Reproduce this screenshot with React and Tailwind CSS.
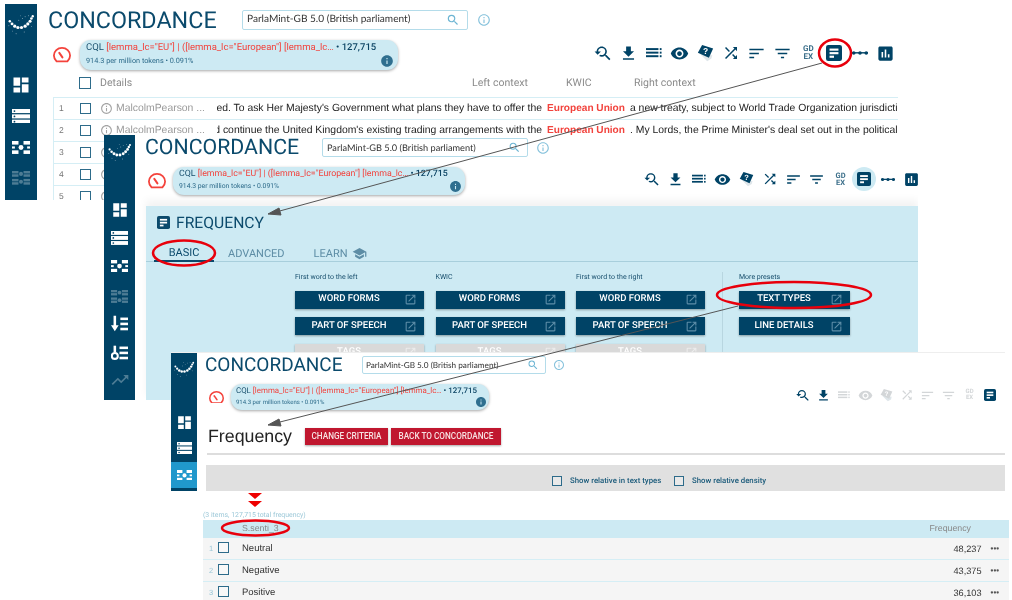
import React from "react";
import {
  MdDashboard, MdYoutubeSearchedFor, MdFileDownload, MdRemoveRedEye, MdShuffle, MdSort, MdFilterList,
  MdAssessment, MdInfoOutline, MdInfo, MdSchool, MdOpenInNew, MdSearch, MdTrendingUp,
} from "react-icons/md";

const Logo = ({ size = 28 }) => (
  <svg width={size} height={size * 0.8} viewBox="0 0 30 24" fill="#fff">
    {[[2, 8, 1.4], [4.5, 11, 1.6], [7.5, 13.5, 1.8], [11, 15, 1.8], [15, 15, 1.8], [19, 13.5, 1.8], [22, 11, 1.8], [24.5, 8, 1.7], [26, 5, 1.5], [27.5, 2.5, 1.3]].map(([x, y, r], i) => (
      <circle key={i} cx={x} cy={y} r={r} />
    ))}
    {[[12, 7, 0.5], [16, 5, 0.5], [19, 3, 0.5], [23, 2, 0.5], [5, 19, 0.5], [9, 22, 0.5], [18, 20, 0.5], [26, 14, 0.5], [1, 13, 0.5], [14, 2, 0.4]].map(([x, y, r], i) => (
      <circle key={i} cx={x} cy={y} r={r} opacity="0.8" />
    ))}
  </svg>
);

const ListIcon = ({ size = 17, color = "#fff" }) => (
  <svg width={size} height={size * 0.82} viewBox="0 0 22 18">
    {[0, 6.5, 13].map((y) => (
      <g key={y}>
        <rect x="0" y={y} width="22" height="5" fill={color} />
        <circle cx="3" cy={y + 2.5} r="1.1" fill="#004366" />
      </g>
    ))}
  </svg>
);

const TreeIcon = ({ size = 17, color = "#fff" }) => (
  <svg width={size} height={size * 0.72} viewBox="0 0 25 18" fill={color}>
    <rect x="0" y="0" width="9" height="5" />
    <rect x="0" y="13" width="9" height="5" />
    <rect x="0" y="7.5" width="4" height="3" />
    <circle cx="12.5" cy="9" r="3.4" />
    <rect x="21" y="7.5" width="4" height="3" />
    <rect x="16" y="0" width="9" height="5" />
    <rect x="16" y="13" width="9" height="5" />
  </svg>
);

const TreeDim = ({ size = 17 }) => (
  <svg width={size} height={size * 0.76} viewBox="0 0 25 19" fill="#fff" opacity="0.3">
    {[0, 11].map((y) => (
      <g key={y}>
        <rect x="0" y={y} width="9" height="3.4" />
        <rect x="0" y={y + 4.6} width="9" height="3.4" />
        <circle cx="12.5" cy={y + 4} r="2.8" />
        <rect x="16" y={y} width="9" height="3.4" />
        <rect x="16" y={y + 4.6} width="9" height="3.4" />
      </g>
    ))}
  </svg>
);

const SortSide = ({ size = 17 }) => (
  <svg width={size} height={size} viewBox="0 0 20 20" fill="#fff">
    <path d="M3 1h3v11h3l-4.5 7L0 12h3z" />
    <rect x="11" y="3" width="9" height="3" />
    <rect x="11" y="9" width="9" height="3" />
    <rect x="11" y="15" width="9" height="3" />
  </svg>
);

const FilterSide = ({ size = 17 }) => (
  <svg width={size} height={size} viewBox="0 0 20 20" fill="#fff">
    <circle cx="4.5" cy="14" r="3.5" fill="none" stroke="#fff" strokeWidth="2.4" />
    <path d="M3 2h3v8H3z" />
    <rect x="10" y="3" width="10" height="3" />
    <rect x="10" y="9" width="10" height="3" />
    <rect x="10" y="15" width="10" height="3" />
  </svg>
);

const Gauge = ({ size = 18 }) => (
  <svg width={size} height={size * 0.85} viewBox="0 0 20 17" fill="none" stroke="#f4433c" strokeWidth="2" strokeLinecap="round" strokeLinejoin="round">
    <path d="M4 16Q1 13 1 9.5A9 8.5 0 0 1 19 9.5Q19 13 16 16Z" />
    <path d="M7 6.5L10.5 11.5" strokeWidth="2.2" />
  </svg>
);

const FreqIcon = ({ size = 18, color = "#004366" }) => (
  <svg width={size} height={size} viewBox="0 0 18 18">
    <rect width="18" height="18" rx="2.5" fill={color} />
    <rect x="4" y="4" width="10" height="2.4" fill="#fff" />
    <rect x="4" y="8" width="10" height="2.4" fill="#fff" />
    <rect x="4" y="12" width="5" height="2.4" fill="#fff" />
  </svg>
);

const LinesIcon = ({ size = 16, color = "#004366" }) => (
  <svg width={size} height={size} viewBox="0 0 18 18" fill={color}>
    <rect x="0" y="3.5" width="14" height="2.2" />
    <rect x="0" y="7.5" width="14" height="2.2" />
    <rect x="0" y="11.5" width="14" height="2.2" />
    <rect x="15.5" y="3.5" width="2" height="2.2" />
    <rect x="15.5" y="7.5" width="2" height="2.2" />
    <rect x="15.5" y="11.5" width="2" height="2.2" />
  </svg>
);

const BookIcon = ({ size = 17, color = "#004366" }) => (
  <svg width={size} height={size} viewBox="0 0 20 20">
    <path d="M3 10l9 9 5-3 1-4z" fill="#dfe6ea" />
    <path d="M6 0l13 4-5 11L1 9z" fill={color} />
    <text x="7" y="11" fontSize="10" fontWeight="700" fill="#fff" fontFamily="Liberation Sans">?</text>
  </svg>
);

const DotsIcon = ({ size = 16, color = "#004366" }) => (
  <svg width={size} height={size * 0.5} viewBox="0 0 18 9" fill={color}>
    <rect x="0" y="3.5" width="18" height="1.6" />
    <circle cx="2" cy="4.5" r="2" />
    <circle cx="9" cy="4.5" r="2" />
    <circle cx="16" cy="4.5" r="2" />
  </svg>
);

const Gdex = ({ cls }) => (
  <span className={`flex flex-col items-center font-bold leading-[0.95] ${cls}`}>
    <span>GD</span>
    <span>EX</span>
  </span>
);

const Checkbox = ({ cls = "w-[11px] h-[11px]" }) => (
  <span className={`block flex-none border-[1.5px] border-[#2d6b8a] bg-white/30 ${cls}`} />
);

const Btn = ({ w, label, grey }) => (
  <div className={`flex h-[18px] flex-none items-center shadow-[0_1px_2px_rgba(0,0,0,0.35)] ${w} ${grey ? "bg-[#d9d9d9]" : "bg-[#004366]"}`}>
    <span className="flex-1 text-center text-[9.5px] font-medium text-white">{label}</span>
    <span className="mr-[7px] flex w-[14px] justify-center">
      <MdOpenInNew className={`flex-none text-[13px] ${grey ? "text-white/50" : "text-[#5d8ea8]"}`} />
    </span>
  </div>
);

const Pill = ({ box, text, sub, info }) => (
  <div className={`flex flex-none flex-col justify-center rounded-[11px] bg-[#cdeaf3] shadow-[0_1px_3px_rgba(0,0,0,0.35)] ${box}`}>
    <div className={`flex items-center whitespace-nowrap ${text}`}>
      <span className="text-[#174e6c]">CQL&nbsp;</span>
      <span className="text-[#f2433d]">[lemma_lc="EU"] | ([lemma_lc="European"] [lemma_lc…</span>
      <span className="font-medium text-[#0c4464]">&nbsp;• 127,715</span>
    </div>
    <div className="flex items-center justify-between">
      <span className={`text-[#2d6b8a] ${sub}`}>914.3 per million tokens • 0.091%</span>
      <MdInfo className={`text-[#2f6f8f] ${info}`} />
    </div>
  </div>
);

const Toolbar = ({ ml, slot, s, gd, active, dim, count = 12 }) => {
  const c = "#004366";
  const g = "#d3d6d8";
  const col = (i) => (dim && i >= 2 && i <= 8 ? g : c);
  const icons = [
    <MdYoutubeSearchedFor size={s + 3} color={col(0)} />,
    <MdFileDownload size={s + 3} color={col(1)} />,
    <LinesIcon size={s} color={col(2)} />,
    <MdRemoveRedEye size={s + 3} color={col(3)} />,
    <BookIcon size={s + 1} color={col(4)} />,
    <MdShuffle size={s + 2} color={col(5)} />,
    <MdSort size={s + 3} color={col(6)} />,
    <MdFilterList size={s + 3} color={col(7)} />,
    <Gdex cls={`${gd} ${dim ? "text-[#d3d6d8]" : "text-[#3c6f8a]"}`} />,
    <span className={active ? "flex h-[24px] w-[24px] flex-none items-center justify-center rounded-full bg-[#cdeaf3]" : "flex"}><FreqIcon size={s} /></span>,
    <DotsIcon size={s} />,
    <MdAssessment size={s + 3} color={c} />,
  ].slice(0, count);
  return (
    <div className={`-mt-[4px] flex items-center ${ml}`}>
      {icons.map((ic, i) => (
        <div key={i} className={`flex flex-none items-center justify-center ${slot}`}>{ic}</div>
      ))}
    </div>
  );
};

const Row1 = ({ n, left, right, kwic = true }) => (
  <div className="flex h-[22px] flex-none items-center border-t border-[#d5eef5] font-['Liberation_Sans',sans-serif] text-[#222]">
    <span className="w-[26px] flex-none pl-[5px] text-[8.5px] text-[#777]">{n}</span>
    <Checkbox />
    <MdInfoOutline className="ml-[9px] flex-none text-[13px] text-[#a4a4a4]" />
    <span className="ml-[3px] w-[101px] flex-none truncate text-[10.4px] text-[#9a9a9a]">MalcolmPearson ...</span>
    {kwic && (
      <>
        <div className="flex w-[325px] flex-none justify-end overflow-hidden whitespace-nowrap text-[10.4px]">{left}</div>
        <span className="mx-[5px] flex-none whitespace-nowrap text-[10.1px] font-bold text-[#f2433d]">European Union</span>
        <div className="flex-1 overflow-hidden whitespace-nowrap text-[10.4px]">{right}</div>
      </>
    )}
  </div>
);

const FreqRow = ({ n, label, val }) => (
  <div className="flex h-[22px] flex-none items-center border-b border-[#d5eef5] bg-[#f5f5f5] font-['Liberation_Sans',sans-serif]">
    <span className="w-[15px] flex-none pl-[6px] text-[7.5px] text-[#9cc8d8]">{n}</span>
    <Checkbox cls="w-[11px] h-[11px] -mt-[3px]" />
    <span className="ml-[13px] mt-[2px] flex-1 text-[9.5px] text-[#333]">{label}</span>
    <span className="mt-[2px] text-[9.2px] text-[#333]">{val}</span>
    <span className="ml-[9px] mr-[10px] text-[8px] font-bold leading-none text-[#555]">•••</span>
  </div>
);

const Overlay = () => (
  <svg className="pointer-events-none absolute left-0 top-0" width="1012" height="600" viewBox="0 0 1012 600">
    <g stroke="#555" strokeWidth="1" fill="#555">
      <line x1="822" y1="63" x2="276" y2="212" />
      <polygon points="268,214 279,208 281,215" />
      <line x1="738" y1="306" x2="276" y2="423" />
      <polygon points="268,425 279,419 281,426" />
    </g>
    <g fill="none" stroke="#e8000c" strokeWidth="2.5">
      <ellipse cx="835" cy="53" rx="16" ry="13.5" />
      <ellipse cx="184" cy="253" rx="31" ry="12.5" />
      <ellipse cx="794" cy="295" rx="77" ry="13" />
      <ellipse cx="255.5" cy="528" rx="33.5" ry="7.5" />
    </g>
    <g fill="#ee0000">
      <polygon points="248,493 262,493 255,499" />
      <polygon points="248,501 262,501 255,507" />
    </g>
  </svg>
);

export default function App() {
  return (
    <div className="relative h-[600px] w-[1012px] overflow-hidden bg-white font-[Roboto,sans-serif] blur-[0.4px] [text-rendering:geometricPrecision]">
      {/* window 1 */}
      <div className="absolute left-[5px] top-[4px] flex h-[196px] w-[893px] overflow-hidden bg-white">
        <div className="flex w-[32px] flex-none flex-col items-center bg-[#004366]">
          <div className="mt-[10px]"><Logo size={27} /></div>
          <div className="mt-[39px]"><MdDashboard size={20} color="#fff" /></div>
          <div className="mt-[14px]"><ListIcon size={18} /></div>
          <div className="mt-[18px]"><TreeIcon size={18} /></div>
          <div className="mt-[17px]"><TreeDim size={18} /></div>
        </div>
        <div className="flex min-w-0 flex-1 flex-col">
          <div className="flex items-center pt-[4px]">
            <h1 className="ml-[11px] w-[194px] flex-none text-[23.3px] leading-[24px] text-[#0b4a6c]">CONCORDANCE</h1>
            <div className="flex h-[20px] w-[226px] flex-none items-center justify-between rounded-[2px] border border-[#b4dcea] pl-[4px] pr-[7px] font-[Lato,sans-serif] text-[10.1px] text-[#333]">
              <span>ParlaMint-GB 5.0 (British parliament)</span>
              <MdSearch size={14} color="#6db5d3" />
            </div>
            <MdInfoOutline className="ml-[9px] text-[14px] text-[#86c2dc]" />
          </div>
          <div className="mt-[8px] flex items-center">
            <div className="ml-[16px] w-[27px] flex-none"><Gauge size={18} /></div>
            <Pill box="w-[318px] h-[30px] pl-[6px] pr-[4px]" text="text-[9.5px] leading-[12px]" sub="text-[7.3px]" info="text-[14px]" />
            <Toolbar ml="ml-[192px]" slot="w-[25.7px]" s={16} gd="text-[8px]" />
          </div>
          <div className="mt-[7px] flex h-[12px] items-center text-[10.5px] text-[#8b8b8b]">
            <span className="ml-[42px]"><Checkbox cls="w-[12px] h-[12px]" /></span>
            <span className="ml-[9px] w-[372px] flex-none">Details</span>
            <span className="w-[94px] flex-none">Left context</span>
            <span className="w-[68px] flex-none">KWIC</span>
            <span>Right context</span>
          </div>
          <div className="ml-[16px] mt-[8px] flex flex-col border-l border-[#d5eef5]">
            <Row1 n="1" left="ed. To ask Her Majesty's Government what plans they have to offer the" right="a new treaty, subject to World Trade Organization jurisdiction and" />
            <Row1 n="2" left="d continue the United Kingdom's existing trading arrangements with the" right=". My Lords, the Prime Minister's deal set out in the political declaration" />
            <Row1 n="3" kwic={false} />
            <Row1 n="4" kwic={false} />
            <Row1 n="5" kwic={false} />
          </div>
        </div>
      </div>

      {/* window 2 */}
      <div className="absolute left-[104px] top-[135px] flex h-[265px] w-[814px] overflow-hidden bg-white">
        <div className="flex w-[31px] flex-none flex-col items-center bg-[#004366]">
          <div className="mt-[8px]"><Logo size={24} /></div>
          <div className="mt-[39px]"><MdDashboard size={18} color="#fff" /></div>
          <div className="mt-[12px]"><ListIcon size={17} /></div>
          <div className="mt-[15px]"><TreeIcon size={17} /></div>
          <div className="mt-[18px]"><TreeDim size={17} /></div>
          <div className="mt-[12px]"><SortSide size={17} /></div>
          <div className="mt-[12px]"><FilterSide size={17} /></div>
          <div className="mt-[9px] opacity-30"><MdTrendingUp size={20} color="#fff" /></div>
        </div>
        <div className="flex min-w-0 flex-1 flex-col">
          <div className="flex items-center pt-[3px]">
            <h1 className="ml-[10px] w-[177px] flex-none text-[21.3px] leading-[19px] text-[#0b4a6c]">CONCORDANCE</h1>
            <div className="flex h-[19px] w-[206px] flex-none items-center justify-between rounded-[2px] border border-[#b4dcea] pl-[4px] pr-[6px] font-[Lato,sans-serif] text-[9.2px] text-[#333]">
              <span>ParlaMint-GB 5.0 (British parliament)</span>
              <MdSearch size={13} color="#6db5d3" />
            </div>
            <MdInfoOutline className="ml-[8px] text-[14px] text-[#86c2dc]" />
          </div>
          <div className="mt-[10px] flex items-center">
            <div className="ml-[13px] w-[25px] flex-none"><Gauge size={18} /></div>
            <Pill box="w-[292px] h-[28px] pl-[6px] pr-[3px]" text="text-[8.8px] leading-[11px]" sub="text-[6.8px]" info="text-[13px]" />
            <Toolbar ml="ml-[175px]" slot="w-[23.6px]" s={14} gd="text-[7.5px]" active />
          </div>
          <div className="ml-[11px] mt-[11px] flex flex-1 flex-col bg-[#cdeaf3] shadow-[0_-6px_8px_rgba(0,0,0,0.05)]">
            <div className="flex items-center pl-[11px] pt-[10px]">
              <FreqIcon size={13} color="#0b4a6c" />
              <span className="ml-[6px] text-[15.7px] leading-[13px] text-[#0b4a6c]">FREQUENCY</span>
            </div>
            <div className="mt-[16px] flex h-[17px] items-center border-b border-[#a8cfdc] text-[11px] leading-none text-[#5d8da5]">
              <span className="ml-[8px] flex h-[17px] w-[60px] items-center justify-center border-b-2 border-[#0b4a6c] text-[#0b4a6c]">BASIC</span>
              <span className="ml-[14px]">ADVANCED</span>
              <span className="ml-[29px]">LEARN</span>
              <MdSchool size={15} className="ml-[4px]" />
            </div>
            <div className="mt-[10px] flex pl-[149px]">
              {[["First word to the left", "ml-0"], ["KWIC", "ml-[11.5px]"], ["First word to the right", "ml-[11.5px]"]].map(([title, m]) => (
                <div key={title} className={`flex w-[129px] flex-none flex-col gap-[8.5px] ${m}`}>
                  <span className="h-[10px] text-[7px] leading-[10px] text-[#174e6c]">{title}</span>
                  <Btn w="w-[129px]" label="WORD FORMS" />
                  <Btn w="w-[129px]" label="PART OF SPEECH" />
                  <Btn w="w-[129px]" label="TAGS" grey />
                </div>
              ))}
              <div className="ml-[17px] flex w-[128px] flex-none flex-col gap-[8.5px] border-l border-[#b8d6e0] pl-[16px]">
                <span className="h-[10px] text-[7px] leading-[10px] text-[#174e6c]">More presets</span>
                <Btn w="w-[111px]" label="TEXT TYPES" />
                <Btn w="w-[111px]" label="LINE DETAILS" />
              </div>
            </div>
          </div>
        </div>
      </div>

      {/* window 3 */}
      <div className="absolute left-[171px] top-[352px] flex h-[248px] w-[841px] flex-col overflow-hidden bg-white">
        <div className="h-[1px] w-[834px] flex-none bg-[#eeeeee]" />
        <div className="flex h-[138px] flex-none">
          <div className="flex w-[26px] flex-none flex-col items-center bg-[#004366]">
            <div className="mt-[8px]"><Logo size={21} /></div>
            <div className="mt-[36px]"><MdDashboard size={17} color="#fff" /></div>
            <div className="mt-[11px]"><ListIcon size={15} /></div>
            <div className="mt-[8px] flex h-[27px] w-full flex-none items-center justify-center border-b border-[#004366] bg-[#2098cc]"><TreeIcon size={15} /></div>
          </div>
          <div className="flex w-[808px] flex-none flex-col">
            <div className="flex items-center pt-[3px]">
              <h1 className="ml-[8px] w-[157px] flex-none text-[19px] leading-[18px] text-[#0b4a6c]">CONCORDANCE</h1>
              <div className="flex h-[18px] w-[184px] flex-none items-center justify-between rounded-[2px] border border-[#b4dcea] pl-[3px] pr-[6px] font-[Lato,sans-serif] text-[8.2px] text-[#333]">
                <span>ParlaMint-GB 5.0 (British parliament)</span>
                <MdSearch size={12} color="#6db5d3" />
              </div>
              <MdInfoOutline className="ml-[7px] text-[12px] text-[#86c2dc]" />
            </div>
            <div className="mt-[10px] flex items-center">
              <div className="ml-[12px] w-[22px] flex-none"><Gauge size={15} /></div>
              <Pill box="w-[258px] h-[26px] pl-[5px] pr-[2px]" text="text-[7.9px] leading-[10px]" sub="text-[6px]" info="text-[12px]" />
              <Toolbar ml="ml-[303px]" slot="w-[20.9px]" s={12} gd="text-[6px]" dim count={10} />
            </div>
            <div className="mt-[16px] flex h-[20px] items-center">
              <span className="ml-[11px] w-[97px] flex-none font-['Liberation_Sans',sans-serif] text-[17.8px] leading-[20px] text-[#222]">Frequency</span>
              <button className="flex h-[17px] w-[83px] flex-none items-center justify-center bg-[#c0172f] text-[8.2px] font-medium text-[#f7e3e3] shadow-[0_1px_2px_rgba(0,0,0,0.35)]">CHANGE CRITERIA</button>
              <button className="ml-[3px] flex h-[17px] w-[110px] flex-none items-center justify-center bg-[#c0172f] text-[8.2px] font-medium text-[#f7e3e3] shadow-[0_1px_2px_rgba(0,0,0,0.35)]">BACK TO CONCORDANCE</button>
            </div>
            <div className="ml-[10px] mt-[7px] h-[2px] flex-none bg-[#dddddd]" />
            <div className="ml-[9px] mt-[10px] flex h-[26px] flex-none items-end bg-[#e0e0e0] pb-[5px] text-[7.8px] font-medium text-[#1a5a7a]">
              <span className="ml-[346px]"><Checkbox cls="w-[10px] h-[10px]" /></span>
              <span className="ml-[8px] w-[104px] flex-none leading-[10px]">Show relative in text types</span>
              <Checkbox cls="w-[10px] h-[10px]" />
              <span className="ml-[8px] leading-[10px]">Show relative density</span>
            </div>
          </div>
        </div>
        <div className="ml-[32px] mt-[20px] flex w-[806px] flex-none flex-col">
          <span className="text-[6.9px] leading-[9px] text-[#9cc8d8]">(3 items, 127,715 total frequency)</span>
          <div className="flex h-[18px] flex-none items-center bg-[#cdeaf3] font-['Liberation_Sans',sans-serif] text-[8.8px] text-[#888]">
            <span className="ml-[39px] flex-1">S.senti_3</span>
            <span className="mr-[38px]">Frequency</span>
          </div>
          <FreqRow n="1" label="Neutral" val="48,237" />
          <FreqRow n="2" label="Negative" val="43,375" />
          <FreqRow n="3" label="Positive" val="36,103" />
        </div>
      </div>

      <Overlay />
    </div>
  );
}
